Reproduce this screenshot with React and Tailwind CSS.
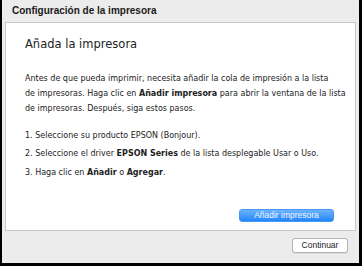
export default function App() {
  const body = { fontFamily: '"DejaVu Sans", "Liberation Sans", sans-serif' };
  const ui = { fontFamily: '"Liberation Sans", Arial, sans-serif' };
  return (
    <div className="w-[362px] h-[266px] bg-[#ececec] border-l-2 border-r-[3px] border-b-[3px] border-black flex flex-col">
      <div className="h-[22px] pl-[10px] pt-[5px] text-[10px] font-bold leading-[12px] text-[#1a1a1a]" style={ui}>
        Configuración de la impresora
      </div>
      <div className="ml-[3px] mr-[3px] h-[209px] bg-white border border-[#c8c8c8] flex flex-col pl-[19px] pr-[10px]" style={body}>
        <h1 className="mt-[14px] text-[11.5px] leading-[14px] text-[#222]">Añada la impresora</h1>
        <p className="mt-[20px] text-[8px] leading-[15px] text-[#222] whitespace-nowrap">
          Antes de que pueda imprimir, necesita añadir la cola de impresión a la lista
          <br />
          de impresoras. Haga clic en <b>Añadir impresora</b> para abrir la ventana de la lista
          <br />
          de impresoras. Después, siga estos pasos.
        </p>
        <div className="mt-[11.5px] flex flex-col gap-[3.5px] text-[8px] leading-[15px] text-[#222] whitespace-nowrap">
          <p>1. Seleccione su producto EPSON (Bonjour).</p>
          <p>2. Seleccione el driver <b>EPSON Series</b> de la lista desplegable Usar o Uso.</p>
          <p>3. Haga clic en <b>Añadir</b> o <b>Agregar</b>.</p>
        </div>
        <div className="mt-auto mb-[8px] pr-[11px] flex justify-end">
          <button
            className="w-[95px] h-[13px] rounded-[3px] bg-gradient-to-b from-[#6ab2fb] to-[#1f86fb] text-[#eef5ff] text-[8.5px] leading-[11px] border border-[#4a97f5]"
            style={ui}
          >
            Añadir impresora
          </button>
        </div>
      </div>
      <div className="flex justify-end pr-[11px] pt-[7px]">
        <button
          className="w-[56px] h-[15px] rounded-[3px] bg-white border border-[#b4b4b4] text-[8.5px] leading-[13px] text-[#222] shadow-[0_0.5px_0.5px_rgba(0,0,0,0.15)]"
          style={ui}
        >
          Continuar
        </button>
      </div>
    </div>
  );
}
